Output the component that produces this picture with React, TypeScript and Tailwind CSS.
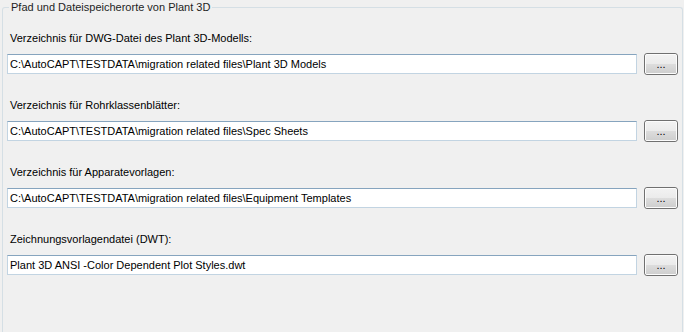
import React from "react";

const rows = [
  { label: "Verzeichnis für DWG-Datei des Plant 3D-Modells:", value: "C:\\AutoCAPT\\TESTDATA\\migration related files\\Plant 3D Models" },
  { label: "Verzeichnis für Rohrklassenblätter:", value: "C:\\AutoCAPT\\TESTDATA\\migration related files\\Spec Sheets" },
  { label: "Verzeichnis für Apparatevorlagen:", value: "C:\\AutoCAPT\\TESTDATA\\migration related files\\Equipment Templates" },
  { label: "Zeichnungsvorlagendatei (DWT):", value: "Plant 3D ANSI -Color Dependent Plot Styles.dwt" },
];

export default function App() {
  return (
    <div
      className="w-[684px] h-[332px] overflow-hidden bg-[#f0f0f0] text-[11px] leading-[14px] text-black"
      style={{ fontFamily: '"Liberation Sans", Arial, sans-serif' }}
    >
      <div className="relative mt-[7px] ml-[2px] mr-[1px] h-[340px] border-t border-x border-[#d5dfe5] rounded-t-[3px] pt-[23px] pl-[4px] pr-[4px]">
        <div className="absolute -top-[8px] left-[6px] px-[2px] bg-[#f0f0f0] text-[#1e1e1e] leading-[14px]">
          Pfad und Dateispeicherorte von Plant 3D
        </div>
        <div className="flex flex-col gap-[23px]">
          {rows.map((r) => (
            <div key={r.label} className="flex flex-col">
              <div className="pl-[3px] h-[14px] mb-[8px]">{r.label}</div>
              <div className="flex items-start gap-[7px]">
                <div className="mt-[1px] w-[630px] h-[20px] bg-white border border-[#c2d4e2] border-t-[#86a4be] pl-[2px] flex items-center leading-[14px] whitespace-nowrap overflow-hidden">
                  {r.value}
                </div>
                <button className="w-[34px] h-[22px] rounded-[3px] border border-[#707070] p-0 overflow-hidden">
                  <div className="w-full h-full rounded-[2px] border border-[#fcfcfc] flex flex-col">
                    <div className="h-1/2 bg-gradient-to-b from-[#f2f2f2] to-[#ebebeb]" />
                    <div className="h-1/2 bg-gradient-to-b from-[#dddddd] to-[#cfcfcf] relative">
                      <span className="absolute left-0 right-0 -top-[7px] text-center text-[11px] leading-[14px] text-black">...</span>
                    </div>
                  </div>
                </button>
              </div>
            </div>
          ))}
        </div>
      </div>
    </div>
  );
}
